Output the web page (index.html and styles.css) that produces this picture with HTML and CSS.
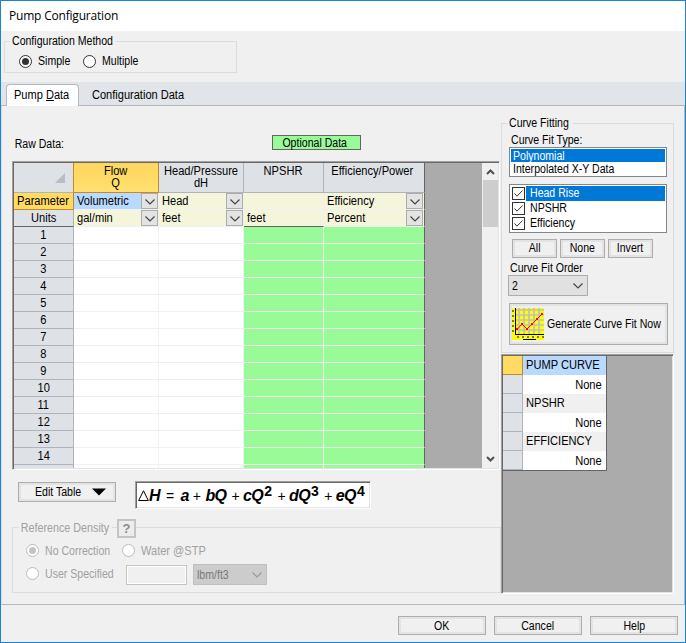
FILE: index.html
```html
<!DOCTYPE html>
<html lang="en">
<head>
<meta charset="utf-8">
<title>Pump Configuration</title>
<link rel="stylesheet" href="styles.css">
</head>
<body>
<div class="window">
  <header class="title">Pump Configuration</header>

  <section class="method">
    <fieldset class="group method-group">
      <legend><span class="t w-method">Configuration Method</span></legend>
      <label class="radio simple"><i class="dot on"></i><span class="t">Simple</span></label>
      <label class="radio"><i class="dot"></i><span class="t">Multiple</span></label>
    </fieldset>
  </section>

  <nav class="tabs">
    <div class="tab active"><span class="t w-wide">Pump <u>D</u>ata</span></div>
    <div class="tab"><span class="t w-wide">Configuration Data</span></div>
  </nav>

  <main class="page">
    <div class="left">
      <div class="raw"><span class="t raw-label">Raw Data:</span><div class="optional"><span class="t c">Optional Data</span></div></div>

      <div class="sheet sunken">
        <div class="grid">
          <div class="h corner"><svg width="10" height="10"><path d="M10 0V10H0Z" fill="#b8bdc3"/></svg></div>
          <div class="h sel"><span class="g c">Flow<br>Q</span></div>
          <div class="h"><span class="g c">Head/Pressure<br>dH</span></div>
          <div class="h"><span class="g c">NPSHR</span></div>
          <div class="h last"><span class="g c">Efficiency/Power</span></div>

          <div class="n cur"><span class="g c">Parameter</span></div>
          <div class="p blue"><span class="g">Volumetric</span><b class="drop"><svg width="10" height="6"><path d="M.5 .5L5 5L9.500 .5"/></svg></b></div>
          <div class="p"><span class="g">Head</span><b class="drop"><svg width="10" height="6"><path d="M.5 .5L5 5L9.500 .5"/></svg></b></div>
          <div class="p"></div>
          <div class="p last"><span class="g">Efficiency</span><b class="drop"><svg width="10" height="6"><path d="M.5 .5L5 5L9.500 .5"/></svg></b></div>

          <div class="n dark"><span class="g c">Units</span></div>
          <div class="p"><span class="g">gal/min</span><b class="drop"><svg width="10" height="6"><path d="M.5 .5L5 5L9.500 .5"/></svg></b></div>
          <div class="p"><span class="g">feet</span><b class="drop"><svg width="10" height="6"><path d="M.5 .5L5 5L9.500 .5"/></svg></b></div>
          <div class="p dark"><span class="g">feet</span></div>
          <div class="p last"><span class="g">Percent</span><b class="drop"><svg width="10" height="6"><path d="M.5 .5L5 5L9.500 .5"/></svg></b></div>

          <div class="n"><span class="g c">1</span></div><div class="d"></div><div class="d"></div><div class="d o"></div><div class="d o last"></div>
          <div class="n"><span class="g c">2</span></div><div class="d"></div><div class="d"></div><div class="d o"></div><div class="d o last"></div>
          <div class="n"><span class="g c">3</span></div><div class="d"></div><div class="d"></div><div class="d o"></div><div class="d o last"></div>
          <div class="n"><span class="g c">4</span></div><div class="d"></div><div class="d"></div><div class="d o"></div><div class="d o last"></div>
          <div class="n"><span class="g c">5</span></div><div class="d"></div><div class="d"></div><div class="d o"></div><div class="d o last"></div>
          <div class="n"><span class="g c">6</span></div><div class="d"></div><div class="d"></div><div class="d o"></div><div class="d o last"></div>
          <div class="n"><span class="g c">7</span></div><div class="d"></div><div class="d"></div><div class="d o"></div><div class="d o last"></div>
          <div class="n"><span class="g c">8</span></div><div class="d"></div><div class="d"></div><div class="d o"></div><div class="d o last"></div>
          <div class="n"><span class="g c">9</span></div><div class="d"></div><div class="d"></div><div class="d o"></div><div class="d o last"></div>
          <div class="n"><span class="g c">10</span></div><div class="d"></div><div class="d"></div><div class="d o"></div><div class="d o last"></div>
          <div class="n"><span class="g c">11</span></div><div class="d"></div><div class="d"></div><div class="d o"></div><div class="d o last"></div>
          <div class="n"><span class="g c">12</span></div><div class="d"></div><div class="d"></div><div class="d o"></div><div class="d o last"></div>
          <div class="n"><span class="g c">13</span></div><div class="d"></div><div class="d"></div><div class="d o"></div><div class="d o last"></div>
          <div class="n"><span class="g c">14</span></div><div class="d"></div><div class="d"></div><div class="d o"></div><div class="d o last"></div>
          <div class="n"></div><div class="d"></div><div class="d"></div><div class="d o"></div><div class="d o last"></div>
        </div>
        <div class="scroll">
          <svg width="9" height="6"><path d="M1 5L4.500 1.500L8 5"/></svg>
          <div class="thumb"></div>
          <svg class="down" width="9" height="6"><path d="M1 1L4.500 4.500L8 1"/></svg>
        </div>
      </div>

      <div class="tools">
        <div class="btn edit"><span class="t">Edit Table</span><svg width="14" height="8"><path d="M0 .5H14L7 7.500Z"/></svg></div>
        <div class="formula sunken"><svg class="delta" width="11" height="11"><path d="M.7 10.500H10.300L5.500 .8Z"/></svg><i>H</i><span class="eq">=</span><i>a</i><span class="plus p1">+</span><i>bQ</i><span class="plus">+</span><i>cQ</i><sup>2</sup><span class="plus p3">+</span><i>dQ</i><sup>3</sup><span class="plus p3">+</span><i>eQ</i><sup>4</sup></div>
      </div>

      <div class="density">
        <div class="density-head"><span class="t w-density">Reference Density</span><span class="help">?</span></div>
        <div class="line l1"><label class="radio"><i class="dot on"></i><span class="t">No Correction</span></label><label class="radio"><i class="dot"></i><span class="t w-wide">Water @STP</span></label></div>
        <div class="line l2"><label class="radio"><i class="dot"></i><span class="t">User Specified</span></label><span class="input"></span><span class="select off"><span class="t">lbm/ft3</span><svg width="10" height="6"><path d="M.5 .5L5 5L9.500 .5"/></svg></span></div>
      </div>
    </div>

    <div class="right">
      <fieldset class="group fit">
        <legend><span class="t">Curve Fitting</span></legend>
        <div class="fit-label"><span class="t">Curve Fit Type:</span></div>
        <div class="list types"><div class="hi"><span class="t">Polynomial</span></div><div><span class="t">Interpolated X-Y Data</span></div></div>
        <div class="list checks">
          <div><svg width="13" height="13"><rect x=".5" y=".5" width="12" height="12"/><path d="M2.500 6.500L5 9.200L10.500 3.500"/></svg><span class="hi"><span class="t">Head Rise</span></span></div>
          <div><svg width="13" height="13"><rect x=".5" y=".5" width="12" height="12"/><path d="M2.500 6.500L5 9.200L10.500 3.500"/></svg><span><span class="t">NPSHR</span></span></div>
          <div><svg width="13" height="13"><rect x=".5" y=".5" width="12" height="12"/><path d="M2.500 6.500L5 9.200L10.500 3.500"/></svg><span><span class="t">Efficiency</span></span></div>
        </div>
        <div class="trio"><div class="btn"><span class="t c">All</span></div><div class="btn"><span class="t c">None</span></div><div class="btn"><span class="t c">Invert</span></div></div>
        <div class="order-label"><span class="t">Curve Fit Order</span></div>
        <div class="select order"><span class="t">2</span><svg width="10" height="6"><path d="M.5 .5L5 5L9.500 .5"/></svg></div>
        <div class="btn gen">
          <svg width="32" height="32" shape-rendering="crispEdges">
            <rect width="32" height="32" fill="#ff0"/>
            <path d="M7 0V26M12 0V26M17 0V26M22 0V26M27 0V26M4 2H32M4 7H32M4 12H32M4 17H32M4 22H32" stroke="#c0c0c0" stroke-width="1.700" shape-rendering="auto"/>
            <path d="M0 2.500H2M0 7.500H2M0 12.500H2M0 17.500H2M0 22.500H2M5 29H7M10 29H12M15 29H17M20 29H22M25 29H27M30 29H32" stroke="#808000" stroke-width="2"/>
            <path d="M3.500 0V26.500H32M11 31.500H24" stroke="#000" fill="none"/>
            <path d="M5 21.500L10 16L15 21L20 16L25 11L30 6" stroke="#f00" fill="none" shape-rendering="auto"/>
            <path d="M4 20h2v2h-2zM9 15h2v2h-2zM14 20h2v2h-2zM19 15h2v2h-2zM24 10h2v2h-2zM29 5h2v2h-2z" fill="#f00"/>
          </svg><span class="t">Generate Curve Fit Now</span>
        </div>
      </fieldset>
      <div class="results sunken">
        <div class="rgrid">
          <div class="n cur"></div><div class="r blue"><span class="g">PUMP CURVE</span></div>
          <div class="n"></div><div class="r val"><span class="g">None</span></div>
          <div class="n"></div><div class="r"><span class="g">NPSHR</span></div>
          <div class="n"></div><div class="r val"><span class="g">None</span></div>
          <div class="n"></div><div class="r"><span class="g">EFFICIENCY</span></div>
          <div class="n"></div><div class="r val"><span class="g">None</span></div>
        </div>
      </div>
    </div>
  </main>

  <footer><div class="btn"><span class="t c">OK</span></div><div class="btn"><span class="t c">Cancel</span></div><div class="btn"><span class="t c">Help</span></div></footer>
</div>
</body>
</html>
```
FILE: styles.css
```css
* { box-sizing: border-box; }
body { margin: 0; font: 12px/14px "Liberation Sans", Arial, sans-serif; color: #000; }
svg { display: block; flex: none; }
.window { width: 686px; height: 643px; border: 1px solid #1883d7; background: #f0f0f0; display: flex; flex-direction: column; overflow: hidden; }
.title { height: 30px; background: #fff; padding-left: 8px; font: 12px/30px "Open Sans", "Noto Sans", sans-serif; letter-spacing: -.2px; }

/* The dialog face is a condensed grotesque; grid text is slightly wider */
.t, .g { display: inline-block; white-space: nowrap; transform: scaleX(.88); transform-origin: left center; }
.g { transform: scaleX(.925); }
.w-wide { transform: scaleX(.92); }
.c { transform-origin: center; text-align: center; }

.group { margin: 0; padding: 0; border: 1px solid #dcdcdc; min-width: 0; }
.group legend { padding: 0 2px; height: 14px; }
.method { height: 51px; padding: 3px 0 0 3px; }
.method-group { width: 233px; height: 39px; display: flex; padding: 6px 0 0 14px; }
.method-group legend { width: 106px; margin-left: -9px; }
.radio { display: flex; align-items: center; height: 14px; }
.simple { width: 64px; }
.dot { width: 13px; height: 13px; border: 1px solid #333; border-radius: 50%; background: #fff; margin-right: 6px; flex: none; display: grid; place-items: center; }
.dot.on::after { content: ""; width: 7px; height: 7px; border-radius: 50%; background: #333; }

.tabs { height: 24px; background: #e1e5e9; border-bottom: 1px solid #b4b8bf; display: flex; padding: 2px 0 0 5px; }
.tab { height: 22px; line-height: 23px; padding-left: 13px; }
.tab.active { width: 73px; line-height: 21px; padding-left: 7px; background: #fff; border: 1px solid #b4b8bf; border-bottom: 0; border-radius: 4px 4px 0 0; }

.page { height: 499px; border-right: 1px solid #b4b8bf; border-bottom: 1px solid #b4b8bf; border-left: 1px solid #dcdcdc; display: flex; }
.left { width: 499px; padding: 29px 0 0 10px; }
.raw { display: flex; height: 26px; }
.raw-label { width: 260px; padding: 2px 0 0 3px; line-height: 14px; }
.optional { width: 89px; height: 15px; background: #98fb98; border: 1px solid #646464; text-align: center; line-height: 14px; padding-right: 3px; }
.sunken { border: 1px solid; border-color: #a0a0a0 #fff #fff #a0a0a0; box-shadow: inset 1px 1px #696969, inset -1px -1px #e3e3e3; padding: 1px; }
.sheet { width: 488px; height: 309px; background: #ababab; background-clip: padding-box; display: flex; }
.grid { width: 411px; height: 305px; overflow: hidden; display: grid; grid-template-columns: 60px 85px 85px 80px 101px; grid-template-rows: 30px; grid-auto-rows: 17px; align-content: start; }
.grid > div { border-right: 1px solid #f0f0f0; border-bottom: 1px solid #f0f0f0; }
.grid > .h { background: #dee2e7; border-color: #afb4ba; text-align: center; line-height: 12px; padding-top: 2px; }
.grid > .corner { padding: 10px 0 0 41px; }
.grid > .sel { background: linear-gradient(#ffd65c, #ffe070); border-color: #c28a30; box-shadow: -1px 0 #c28a30; }
.grid > .n, .rgrid > .n { background: #dee2e7; border-right: 1px solid #afb4ba; border-bottom: 1px solid #afb4ba; text-align: center; line-height: 16px; }
.grid > .cur, .rgrid > .cur { background: #ffdc61; border-color: #c28a30; }
.p { background: #f5f5dc; display: flex; align-items: center; justify-content: space-between; padding-left: 3px; }
.blue { background: #b9daff; }
.grid > .dark { border-bottom-color: #646464; }
.d { background: #fff; }
.o { background: #98fb98; }
.grid > .last { border-right-color: #646464; }
.h.last .g { margin-left: -3px; }
.drop { width: 17px; height: 16px; background: #e3e3e3; border: 1px solid #adadad; display: grid; place-items: center; padding-top: 2px; }
.drop svg, .select svg { fill: none; stroke: #444; stroke-width: 1.2; }
.last .drop { margin-right: 1px; }
.scroll { width: 16px; height: 305px; margin-left: 57px; background: #f0f0f0; display: flex; flex-direction: column; align-items: center; padding: 6px 0; }
.scroll svg { stroke: #505050; stroke-width: 2; fill: none; }
.thumb { width: 15px; height: 47px; background: #cdcdcd; margin-top: 5px; }
.scroll .down { margin-top: auto; }

.btn { border: 1px solid #adadad; box-shadow: inset 0 0 0 2px #e3e3e3; background: #f0f0f0; height: 20px; line-height: 17px; text-align: center; }
.tools { display: flex; height: 57px; padding: 11px 0 0 6px; }
.edit { width: 98px; display: flex; align-items: center; padding-left: 16px; margin-top: 1px; }
.edit .t { width: 57px; text-align: left; }
.formula { width: 236px; height: 28px; margin-left: 19px; background: #fff; display: flex; align-items: baseline; padding: 4px 0 0 2px; font-size: 16px; line-height: 19px; letter-spacing: -.6px; }
.formula i { font-weight: bold; }
.delta { fill: none; stroke: #000; }
.eq { margin: 0 7px 0 6px; font-size: 14px; }
.plus { margin: 0 4px 0 5px; font-size: 14px; }
.p1 { margin: 0 5px 0 4px; }
.p3 { margin: 0 4px 0 6px; }
.formula sup { font-size: 14px; line-height: 0; font-weight: bold; vertical-align: baseline; align-self: flex-start; margin: 5px 0 0 1px; }

.density { width: 489px; height: 66px; border: 1px solid #dcdcdc; color: #a0a0a0; }
.density-head { height: 20px; margin: -10px 0 0 6px; display: flex; align-items: center; background: linear-gradient(#f0f0f0, #f0f0f0) 0 0 / 93px 20px no-repeat; }
.w-density { width: 98px; padding-left: 2px; transform: scaleX(.895); }
.help { width: 19px; height: 19px; background: #ececec; border: 2px solid #c4c4c4; text-align: center; font: bold 13px/15px "Liberation Sans", sans-serif; color: #8c8c8c; }
.density .dot { border-color: #bcbcbc; }
.density .dot.on::after { background: #c4c4c4; }
.line { display: flex; align-items: center; padding-left: 13px; }
.l1 { height: 25px; }
.l2 { height: 21px; margin-top: 1px; }
.l1 .radio:first-child { width: 96px; }
.l2 .radio { width: 100px; margin-top: -2px; }
.input { width: 61px; height: 20px; border: 1px solid #c4c4c4; box-shadow: inset 0 0 0 1px #fff; }
.select { border: 1px solid #adadad; background: #e1e1e1; height: 21px; display: flex; align-items: center; justify-content: space-between; padding: 0 4px 0 3px; }
.off { width: 74px; margin-left: 6px; background: #ccc; border-color: #bfbfbf; color: #787878; }
.off svg { stroke: #999; }

.right { width: 173px; margin-left: 0; padding-top: 10px; }
.fit { width: 173px; height: 237px; padding: 3px 0 0 6px; }
.fit legend { width: 66px; height: 14px; margin-left: -1px; }
.fit-label { height: 14px; padding-left: 3px; }
.list { width: 158px; margin-left: 1px; border: 1px solid #828790; background: #fff; }
.types { height: 30px; padding: 1px; line-height: 14px; }
.types > div { padding-left: 2px; height: 13px; }
.hi { background: #0078d7; color: #fff; }
.checks { height: 49px; margin-top: 7px; padding: 1px; line-height: 15px; }
.checks > div { display: flex; align-items: center; height: 15px; padding-left: 1px; }
.checks > div > span { margin-left: 1px; padding-left: 4px; height: 15px; flex: 1; }
.checks svg { fill: #fff; stroke: #333; }
.trio { display: flex; gap: 3px; margin: 6px 0 0 4px; }
.trio .btn { width: 45px; height: 19px; }
.order-label { margin: 3px 0 0 2px; height: 14px; }
.order { width: 80px; margin-top: 0; height: 21px; }
.gen { width: 159px; height: 42px; margin: 7px 0 0 1px; display: flex; align-items: center; padding-left: 2px; }
.gen .t { margin-left: 3px; }
.results { width: 173px; height: 240px; margin-top: 1px; background: #ababab; background-clip: padding-box; }
.rgrid { width: 104px; display: grid; grid-template-columns: 20px 84px; grid-auto-rows: 19px; border-bottom: 1px solid #646464; }
.r { border-right: 1px solid #646464; padding-left: 3px; line-height: 18px; background: #f0f0f0; }
.r.blue { background: #b9daff; }
.r.val { background: #fff; text-align: right; padding-right: 4px; line-height: 20px; }
.val .g { transform-origin: right; }
footer { display: flex; gap: 8px; padding: 11px 0 0 397px; }
footer .btn { width: 88px; height: 19px; line-height: 18px; }
```
